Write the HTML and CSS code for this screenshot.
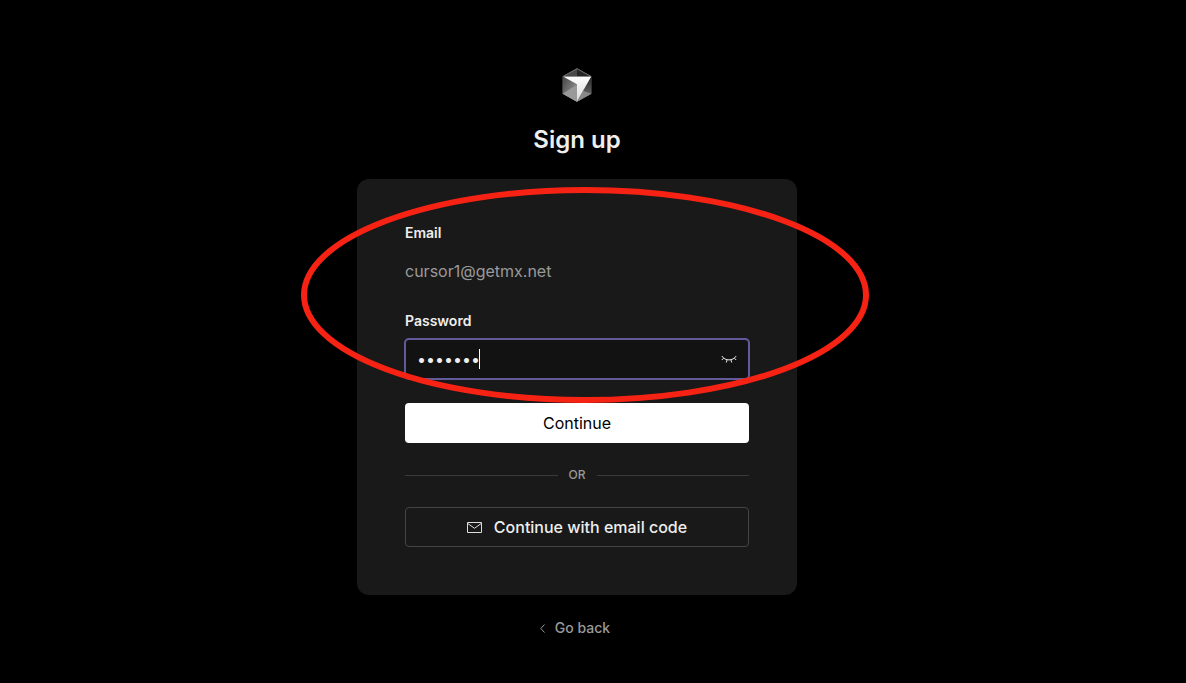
FILE: index.html
```html
<!DOCTYPE html>
<html lang="en">
<head>
    <meta charset="UTF-8">
    <meta name="viewport" content="width=device-width, initial-scale=1.0">
    <title>Sign up</title>
    <link rel="stylesheet" href="styles.css">
</head>
<body>

    <main class="page">
        <svg class="logo" viewBox="45 24 90 102" aria-hidden="true">
            <defs>
                <linearGradient id="leftFace" x1="0" y1="0" x2="1" y2="1">
                    <stop offset="0" stop-color="#444"/>
                    <stop offset="1" stop-color="#a8a8a8"/>
                </linearGradient>
                <linearGradient id="rightFace" x1="0" y1="0" x2="0" y2="1">
                    <stop offset="0" stop-color="#262626"/>
                    <stop offset="1" stop-color="#7a7a7a"/>
                </linearGradient>
                <linearGradient id="arrow" x1="0" y1="0" x2="0" y2="1">
                    <stop offset="0" stop-color="#ffffff"/>
                    <stop offset="1" stop-color="#d8d8d8"/>
                </linearGradient>
            </defs>
            <polygon points="90,25 133,49 133,101 90,125 47,101 47,49" fill="#777"/>
            <polygon points="90,25 133,49 47,49" fill="#6a6a6a"/>
            <polygon points="90,28 90,49 52,49" fill="#4a4a4a"/>
            <polygon points="90,28 128,49 90,49" fill="#262626"/>
            <polygon points="47,49 90,73 90,125 47,101" fill="url(#leftFace)"/>
            <polygon points="47,101 90,74 90,125" fill="#999"/>
            <polygon points="133,49 133,101 90,125" fill="url(#rightFace)"/>
            <polygon points="133,101 90,125 108,92" fill="#888"/>
            <polygon points="50,50 132,50 90,124 90,73" fill="url(#arrow)"/>
        </svg>
        <h1>Sign up</h1>

        <form class="card">
            <label for="email">Email</label>
            <input type="email" id="email" class="email" value="cursor1@getmx.net" readonly>

            <label for="password">Password</label>
            <div class="password-field">
                <input type="password" id="password" value="cursor1">
                <span class="caret"></span>
                <button type="button" class="toggle" aria-label="Show password">
                    <svg viewBox="0 0 16 8" aria-hidden="true">
                        <path d="M.8 1C4 6.2 12 6.2 15.2 1M2.6 3.2L.8 5M6 5L5.3 7.5M10 5L10.7 7.5M13.4 3.2L15.2 5"/>
                    </svg>
                </button>
            </div>

            <button type="submit" class="btn btn-primary">Continue</button>

            <div class="divider">OR</div>

            <button type="button" class="btn btn-outline">
                <svg class="mail" viewBox="0 0 15 11" aria-hidden="true">
                    <path d="M.5 .5H14.5V10.5H.5ZM.8 1.5L7.5 6.3L14.2 1.5"/>
                </svg>
                Continue with email code
            </button>

            <svg class="highlight" viewBox="0 0 568 216" aria-hidden="true">
                <ellipse cx="284" cy="108" rx="281" ry="105"/>
            </svg>
        </form>

        <a href="#" class="back">
            <svg viewBox="0 0 5 9" aria-hidden="true">
                <path d="M4.5 .5L.8 4.5L4.5 8.5"/>
            </svg>
            Go back
        </a>
    </main>

</body>
</html>
```
FILE: styles.css
```css
* {
    box-sizing: border-box;
}
body {
    font-family: 'Inter', sans-serif;
    background-color: #000;
    color: #eee;
    margin: 0;
}
svg {
    display: block;
    fill: none;
}
/* Centred column */
.page {
    display: flex;
    flex-direction: column;
    align-items: center;
    padding: 68px 32px 44px 0;
}
.logo {
    width: 30px;
    height: 34px;
}
h1 {
    margin: 22px 0 23px;
    font-size: 24px;
    line-height: 32px;
    font-weight: 600;
}
/* Sign up card */
.card {
    position: relative;
    display: flex;
    flex-direction: column;
    width: 100%;
    max-width: 440px;
    padding: 44px 48px 48px;
    border-radius: 12px;
    background-color: #191919;
}
label {
    font-size: 14px;
    line-height: 20px;
    font-weight: 600;
}
input {
    width: 100%;
    padding: 0;
    border: none;
    outline: none;
    background: none;
    font-family: inherit;
    font-size: 16px;
    color: #eee;
}
.email {
    height: 24px;
    margin: 16px 0 28px;
    color: #999;
}
.password-field {
    position: relative;
    display: flex;
    align-items: center;
    height: 40px;
    margin: 8px 0 24px;
    padding: 0 12px;
    border-radius: 4px;
    background-color: #121212;
    outline: 2px solid #635a9c;
    outline-offset: -1px;
}
.caret {
    position: absolute;
    left: 74px;
    top: 10px;
    width: 1px;
    height: 20px;
    background-color: #fff;
}
.toggle {
    padding: 0;
    border: none;
    background: none;
    cursor: pointer;
}
.toggle svg {
    width: 16px;
    height: 8px;
    stroke: #eee;
}
/* Buttons */
.btn {
    display: flex;
    align-items: center;
    justify-content: center;
    gap: 12px;
    height: 40px;
    border-radius: 4px;
    font-family: inherit;
    font-size: 16px;
    cursor: pointer;
}
.btn-primary {
    border: none;
    background-color: #fff;
    color: #000;
}
.btn-outline {
    border: 1px solid #444;
    background: none;
    color: #eee;
    font-weight: 500;
}
.mail {
    width: 15px;
    height: 11px;
    stroke: #ddd;
}
.divider {
    display: flex;
    align-items: center;
    gap: 11px;
    margin: 24px 0;
    font-size: 12px;
    line-height: 16px;
    font-weight: 500;
    color: #999;
}
.divider::before,
.divider::after {
    content: "";
    flex: 1;
    height: 1px;
    background-color: #3a3a3a;
}
/* Red ring drawn over the form */
.highlight {
    position: absolute;
    left: -56px;
    top: 8px;
    width: 568px;
    height: 216px;
    stroke: #f62314;
    stroke-width: 6px;
    pointer-events: none;
}
.back {
    display: flex;
    align-items: center;
    gap: 10px;
    margin-top: 23px;
    padding-right: 4px;
    font-size: 14px;
    line-height: 20px;
    font-weight: 500;
    color: #999;
    text-decoration: none;
}
.back svg {
    width: 5px;
    height: 9px;
    stroke: #999;
}
```
